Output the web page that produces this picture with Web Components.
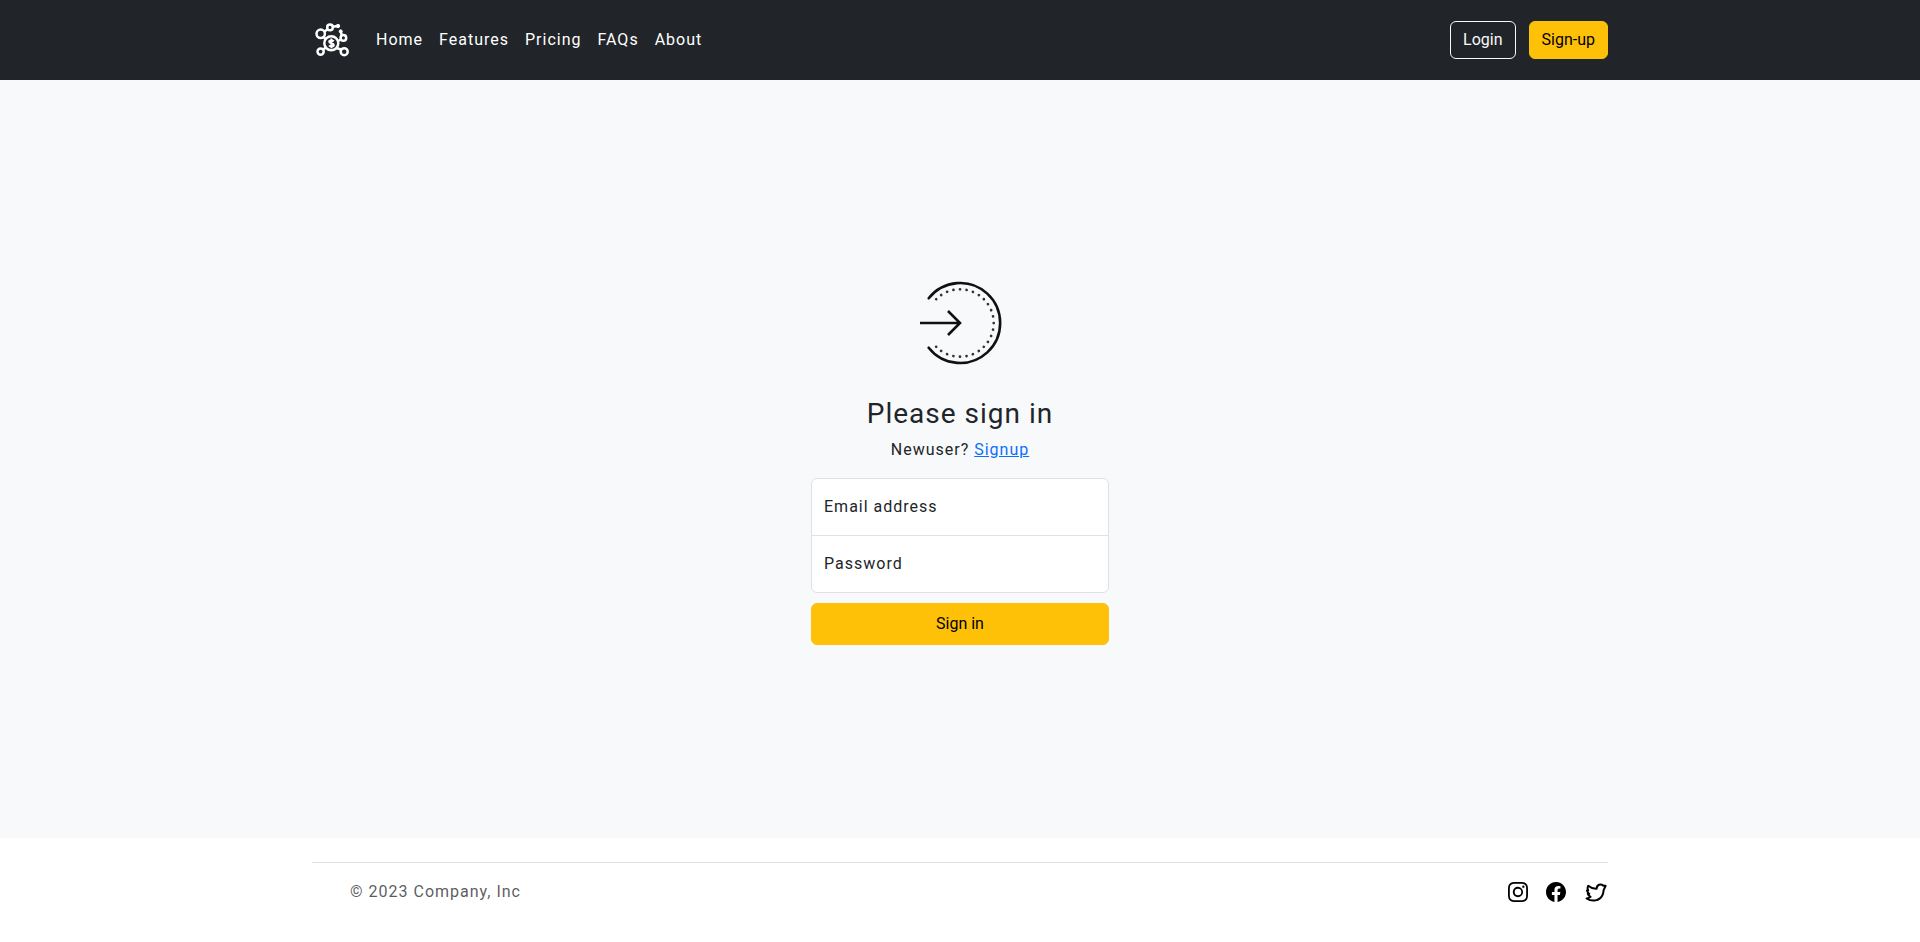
<!DOCTYPE html>
<html lang="en">
<head>
<meta charset="utf-8">
<meta name="viewport" content="width=device-width, initial-scale=1">
<title>Sign in</title>
<style>
body{margin:0;min-height:100vh;display:flex;flex-direction:column;background:#fff;color:#212529;font:400 16px/24px Roboto,"Liberation Sans",sans-serif;letter-spacing:1px;
--accent:#ffc107;--dark:#212529;--line:#dee2e6;--container:1296px}
sign-in-page{flex:1}
</style>
</head>
<body>
<sign-in-page></sign-in-page>
<script>
const define = (name, html) => {
  const template = document.createElement('template');
  template.innerHTML = html;
  customElements.define(name, class extends HTMLElement {
    constructor() {
      super();
      this.attachShadow({mode: 'open'}).append(template.content.cloneNode(true));
    }
  });
};

define('brand-logo', `
<style>:host{display:block;width:40px;height:40px}a{display:block;color:#fff}svg{display:block;width:100%}</style>
<a href="#" aria-label="Company home"><svg viewBox="12 10 40 40" fill="none" stroke="currentColor" stroke-width="2.500">
<circle cx="20.700" cy="23.800" r="4.200"/><circle cx="30" cy="17.400" r="2.800"/>
<path d="M32.500 16.800 38 16M24.500 21.500 28 19M24 27.500 26 29.500M23 39.500 26 37.500M36.500 38 41 39.500M38 31 41 29.500M41.800 25 40.800 22"/>
<circle cx="38" cy="16" r="1.700" fill="currentColor" stroke-width="1"/><circle cx="40.700" cy="21.300" r="1.500" fill="currentColor" stroke-width="1"/>
<circle cx="43.400" cy="27.900" r="2.800"/><circle cx="31.300" cy="33.300" r="7"/><circle cx="20.600" cy="41.600" r="3.100"/><circle cx="44.200" cy="41.700" r="3.500"/>
<path d="M33.800 31.200c-.8-.8-4.600-1.200-4.600.6 0 1.900 4.600 1 4.600 3.100 0 1.900-3.800 1.600-4.800.6M31.400 28.500v9.800" stroke-width="2"/>
</svg></a>`);

define('nav-item', `
<style>:host{display:block}a{display:block;padding:8px;color:#fff;text-decoration:none}</style>
<a href="#"><slot></slot></a>`);

define('action-button', `
<style>
:host{display:block}
button{display:block;box-sizing:border-box;width:100%;margin:0;padding:6px 12px;border:1px solid var(--accent);border-radius:6px;background:var(--accent);color:#000;font:inherit;letter-spacing:0;cursor:pointer}
:host([kind=outline]) button{background:transparent;border-color:#f8f9fa;color:#f8f9fa}
:host([kind=block]) button{padding:8px 12px}
</style>
<button type="button"><slot></slot></button>`);

define('site-header', `
<style>
:host{display:block;background:var(--dark);padding:16px 12px}
.bar{display:flex;align-items:center;max-width:var(--container);min-height:48px;margin:0 auto}
nav{display:flex;margin-left:16px;margin-right:auto}
.actions{display:flex;gap:13px}
</style>
<header class="bar">
<brand-logo></brand-logo>
<nav><nav-item>Home</nav-item><nav-item>Features</nav-item><nav-item>Pricing</nav-item><nav-item>FAQs</nav-item><nav-item>About</nav-item></nav>
<div class="actions"><action-button kind="outline">Login</action-button><action-button>Sign-up</action-button></div>
</header>`);

define('sign-in-mark', `
<style>:host{display:block;width:84px;height:84px}svg{display:block;width:100%}</style>
<svg viewBox="0 0 84 84" fill="none" stroke="#111" aria-hidden="true">
<path d="M10.700 17.300A40 40 0 1 1 10.700 66.700" stroke-width="2.600" stroke-linecap="round"/>
<path d="M18.170 18.170A33.700 33.700 0 1 1 18.170 65.830" stroke="#333" stroke-width="2.700" stroke-linecap="round" pathLength="24" stroke-dasharray="0.010 0.990"/>
<path d="M2 42H42M30 30 42 42 30 54" stroke-width="2.600"/>
</svg>`);

define('floating-field', `
<style>
:host{display:block;position:relative}
input{display:block;box-sizing:border-box;width:100%;height:58px;margin:0;padding:16px 12px;border:1px solid var(--line);border-radius:var(--field-radius,6px);background:#fff;color:inherit;font:inherit;letter-spacing:inherit}
input:focus{outline:2px solid #86b7fe}
label{position:absolute;left:13px;top:17px;pointer-events:none}
input:not(:placeholder-shown)+label{top:1px;font-size:12px}
</style>
<input id="field" placeholder=" "><label for="field"><slot></slot></label>`);

define('sign-in-form', `
<style>
:host{display:block;width:100%;max-width:298px}
form{display:flex;flex-direction:column;align-items:stretch;text-align:center}
sign-in-mark{margin:0 auto 32px}
h1{margin:0 0 8px;font-size:28px;line-height:33px;font-weight:400}
p{margin:0 0 16px}
a{color:#0d6efd}
.fields{text-align:left;margin-bottom:10px}
.first{--field-radius:6px 6px 0 0}
.last{--field-radius:0 0 6px 6px;margin-top:-1px}
</style>
<form>
<sign-in-mark></sign-in-mark>
<h1>Please sign in</h1>
<p>Newuser? <a href="#">Signup</a></p>
<div class="fields"><floating-field class="first">Email address</floating-field><floating-field class="last">Password</floating-field></div>
<action-button kind="block">Sign in</action-button>
</form>`);

define('social-link', `
<style>:host{display:block}a{display:block;color:#000}</style>
<a href="#"><slot></slot></a>`);

define('site-footer', `
<style>
:host{display:block;padding:24px 12px 22px;background:#fff}
footer{display:flex;box-sizing:border-box;align-items:center;justify-content:space-between;max-width:var(--container);min-height:58px;margin:0 auto;border-top:1px solid var(--line)}
span{padding-left:38px;color:rgba(33,37,41,.75)}
.social{display:flex;align-items:center;gap:18px}
svg{display:block;width:20px;height:20px}
.bird{width:24px;height:24px}
</style>
<footer>
<span>© 2023 Company, Inc</span>
<div class="social">
<social-link><svg viewBox="0 0 16 16" fill="currentColor" role="img" aria-label="Instagram"><path d="M8 0C5.829 0 5.556.01 4.703.048 3.850.088 3.269.222 2.760.420a3.900 3.900 0 0 0-1.417.923A3.900 3.900 0 0 0 .420 2.760C.222 3.268.087 3.850.048 4.700.010 5.555 0 5.827 0 8.001c0 2.172.010 2.444.048 3.297.040.852.174 1.433.372 1.942.205.526.478.972.923 1.417.444.445.890.719 1.416.923.510.198 1.090.333 1.942.372C5.555 15.990 5.827 16 8 16s2.444-.010 3.298-.048c.851-.040 1.434-.174 1.943-.372a3.900 3.900 0 0 0 1.416-.923c.445-.445.718-.891.923-1.417.197-.509.332-1.090.372-1.942C15.990 10.445 16 10.173 16 8s-.010-2.445-.048-3.299c-.040-.851-.175-1.433-.372-1.941a3.900 3.900 0 0 0-.923-1.417A3.900 3.900 0 0 0 13.240.420c-.510-.198-1.092-.333-1.943-.372C10.443.010 10.172 0 7.998 0zm-.717 1.442h.718c2.136 0 2.389.007 3.232.046.780.035 1.204.166 1.486.275.373.145.640.319.920.599s.453.546.598.920c.110.281.240.705.275 1.485.039.843.047 1.096.047 3.231s-.008 2.389-.047 3.232c-.035.780-.166 1.203-.275 1.485a2.500 2.500 0 0 1-.599.919c-.280.280-.546.453-.920.598-.280.110-.704.240-1.485.276-.843.038-1.096.047-3.232.047s-2.390-.009-3.233-.047c-.780-.036-1.203-.166-1.485-.276a2.500 2.500 0 0 1-.920-.598 2.500 2.500 0 0 1-.600-.920c-.109-.281-.240-.705-.275-1.485-.038-.843-.046-1.096-.046-3.233s.008-2.388.046-3.231c.036-.780.166-1.204.276-1.486.145-.373.319-.640.599-.920s.546-.453.920-.598c.282-.110.705-.240 1.485-.276.738-.034 1.024-.044 2.515-.045zm4.988 1.328a.960.960 0 1 0 0 1.920.960.960 0 0 0 0-1.920m-4.270 1.122a4.109 4.109 0 1 0 0 8.217 4.109 4.109 0 0 0 0-8.217m0 1.441a2.667 2.667 0 1 1 0 5.334 2.667 2.667 0 0 1 0-5.334"/></svg></social-link>
<social-link><svg viewBox="0 0 16 16" fill="currentColor" role="img" aria-label="Facebook"><path d="M16 8.049c0-4.446-3.582-8.050-8-8.050C3.580 0-.002 3.603-.002 8.050c0 4.017 2.926 7.347 6.750 7.951v-5.625h-2.030V8.050H6.750V6.275c0-2.017 1.195-3.131 3.022-3.131.876 0 1.791.157 1.791.157v1.980h-1.009c-.993 0-1.303.621-1.303 1.258v1.510h2.218l-.354 2.326H9.250V16c3.824-.604 6.750-3.934 6.750-7.951"/></svg></social-link>
<social-link><svg class="bird" viewBox="0 0 24 24" fill="none" stroke="currentColor" stroke-width="2" stroke-linejoin="round" role="img" aria-label="Twitter"><path d="M21.600 5.700c-.8.200-1.600.2-2.600-.2-2.200-2-6.200-1-6.400 3.300-3.400.2-6-1-8.400-3-.9 1.500-.8 3.200 0 4.600l-1.200-.1c.2 1.500 1.100 2.700 2.200 3.500l-1.400.1c.5 1.500 1.500 2.300 2.800 2.900-1 1-2.400 1.500-4 1.700 5.500 3.600 12.900 2.500 15.800-3.300 1-2 1-3.500 1.200-4.900.2-1.200 1.600-2.900 2-4.600z"/></svg></social-link>
</div>
</footer>`);

define('sign-in-page', `
<style>
:host{display:flex;flex-direction:column}
main{flex:1;display:flex;align-items:center;justify-content:center;padding:24px 16px 16px;background:#f8f9fa}
</style>
<site-header></site-header>
<main><sign-in-form></sign-in-form></main>
<site-footer></site-footer>`);
</script>
</body>
</html>
